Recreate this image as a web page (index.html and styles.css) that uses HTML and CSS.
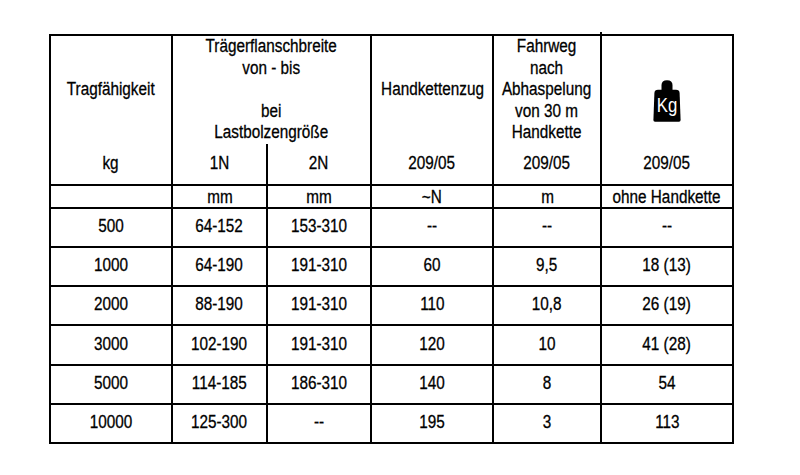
FILE: index.html
```html
<!DOCTYPE html>
<html lang="de">
<head>
<meta charset="utf-8">
<title>Tabelle</title>
<link rel="stylesheet" href="styles.css">
</head>
<body>
<table class="spec">
  <colgroup>
    <col class="c1"><col class="c2"><col class="c3"><col class="c4"><col class="c5"><col class="c6">
  </colgroup>
  <tr class="h1">
    <td><span class="t">Tragfähigkeit</span></td>
    <td colspan="2" class="top"><span class="t">Trägerflanschbreite<br>von - bis<br><br>bei<br>Lastbolzengröße</span></td>
    <td><span class="t">Handkettenzug</span></td>
    <td class="top"><span class="t">Fahrweg<br>nach<br>Abhaspelung<br>von 30 m<br>Handkette</span></td>
    <td class="icon">
      <svg class="kg" width="28" height="42" viewBox="0 0 28 42" aria-label="Gewicht">
        <path d="M8.5 10.5 V5 Q8.5 0.3 14 0.3 Q19.5 0.3 19.5 5 V10.5 Z" fill="#000"/>
        <path d="M5 9.8 H23 Q26.4 9.8 26.6 13 L27.6 40 Q27.6 41.8 26 41.8 H2 Q0.4 41.8 0.4 40 L1.4 13 Q1.6 9.8 5 9.8 Z" fill="#000"/>
        <text x="14" y="32" text-anchor="middle" textLength="20.5" lengthAdjust="spacingAndGlyphs" class="kgtext">Kg</text>
      </svg>
    </td>
  </tr>
  <tr class="h2">
    <td><span class="t">kg</span></td>
    <td class="split"><span class="t">1N</span></td>
    <td><span class="t">2N</span></td>
    <td><span class="t">209/05</span></td>
    <td><span class="t">209/05</span></td>
    <td><span class="t">209/05</span></td>
  </tr>
  <tr class="unit">
    <td></td>
    <td><span class="t">mm</span></td>
    <td><span class="t">mm</span></td>
    <td><span class="t">~N</span></td>
    <td><span class="t">m</span></td>
    <td><span class="t">ohne Handkette</span></td>
  </tr>
  <tr class="row"><td><span class="t">500</span></td><td><span class="t">64-152</span></td><td><span class="t">153-310</span></td><td><span class="t">--</span></td><td><span class="t">--</span></td><td><span class="t">--</span></td></tr>
  <tr class="row"><td><span class="t">1000</span></td><td><span class="t">64-190</span></td><td><span class="t">191-310</span></td><td><span class="t">60</span></td><td><span class="t">9,5</span></td><td><span class="t">18 (13)</span></td></tr>
  <tr class="row"><td><span class="t">2000</span></td><td><span class="t">88-190</span></td><td><span class="t">191-310</span></td><td><span class="t">110</span></td><td><span class="t">10,8</span></td><td><span class="t">26 (19)</span></td></tr>
  <tr class="row tall"><td><span class="t">3000</span></td><td><span class="t">102-190</span></td><td><span class="t">191-310</span></td><td><span class="t">120</span></td><td><span class="t">10</span></td><td><span class="t">41 (28)</span></td></tr>
  <tr class="row"><td><span class="t">5000</span></td><td><span class="t">114-185</span></td><td><span class="t">186-310</span></td><td><span class="t">140</span></td><td><span class="t">8</span></td><td><span class="t">54</span></td></tr>
  <tr class="row"><td><span class="t">10000</span></td><td><span class="t">125-300</span></td><td><span class="t">--</span></td><td><span class="t">195</span></td><td><span class="t">3</span></td><td><span class="t">113</span></td></tr>
</table>
</body>
</html>
```
FILE: styles.css
```css
html, body {
  margin: 0;
  padding: 0;
  background: #fff;
}

.spec {
  border-collapse: separate;
  border-spacing: 0;
  table-layout: fixed;
  width: 685px;
  margin: 34px 0 0 49px;
  border-top: 2px solid #000;
  border-left: 2px solid #000;
  font-family: "Liberation Sans", Arial, sans-serif;
  font-size: 18px;
  color: #000;
}

.c1 { width: 122px; }
.c2 { width: 95px; }
.c3 { width: 104px; }
.c4 { width: 122px; }
.c5 { width: 108px; }
.c6 { width: 132px; }

.spec td {
  border-right: 2px solid #000;
  border-bottom: 2px solid #000;
  text-align: center;
  vertical-align: middle;
  padding: 0;
  line-height: 21.5px;
  white-space: nowrap;
}

.t {
  display: inline-block;
  transform: scaleX(0.85);
  -webkit-text-stroke: 0.3px #000;
}

.h1 { height: 107px; }

.h1 td {
  border-bottom: none;
}

.h1 td.top {
  vertical-align: top;
}

.h1 td.icon {
  vertical-align: top;
  padding-top: 44px;
  position: relative;
}

.h1 td.icon::before {
  content: "";
  position: absolute;
  left: -2px;
  top: -4px;
  width: 2px;
  height: 4px;
  background: #000;
}

.h2 { height: 42px; }

.unit { height: 23px; }

.unit td {
  line-height: 18px;
  padding-top: 1px;
}

.row { height: 39px; }
.row.tall { height: 40px; }

.kg {
  display: block;
  margin: 0 auto;
}

.kgtext {
  fill: #fff;
  font-family: "Liberation Sans", Arial, sans-serif;
  font-size: 21px;
}
```
